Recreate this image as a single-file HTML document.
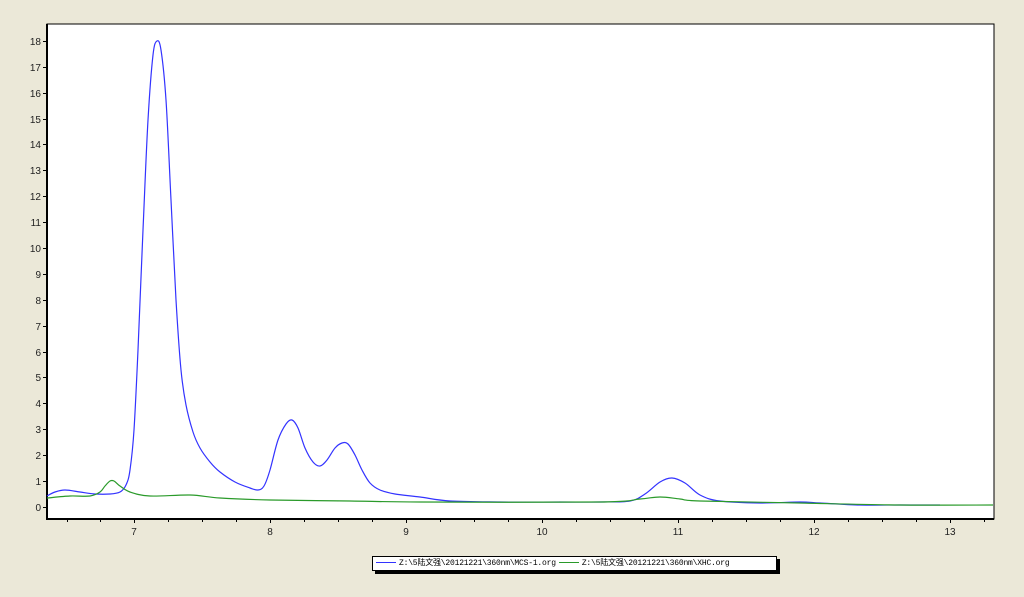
<!DOCTYPE html>
<html><head><meta charset="utf-8"><style>
html,body{margin:0;padding:0;background:#ebe8d8;width:1024px;height:597px;overflow:hidden}
svg{position:absolute;left:0;top:0}
.legend{position:absolute;left:372px;top:556px;width:403px;height:13px;background:#fff;border:1px solid #000;box-shadow:3px 3px 0 #000;font-family:"Liberation Mono","Noto Sans CJK SC",monospace;font-size:8px;letter-spacing:-0.2px;line-height:13px;white-space:nowrap;color:#000;overflow:hidden}
.ln{display:inline-block;width:20px;height:1px;vertical-align:middle;margin:0 3px 0 3px}
</style></head><body>
<svg width="1024" height="597" font-family="Liberation Sans, sans-serif" font-size="10" fill="#222">
<rect x="47" y="24" width="947" height="495" fill="#fff"/>
<path d="M47 24V519H994" fill="none" stroke="#000" stroke-width="2"/>
<rect x="47" y="24" width="947" height="495" fill="none" stroke="#000" stroke-width="1"/>
<g stroke="#000" stroke-width="1">
<path d="M43 41.5h4M43 67.5h4M43 93.5h4M43 119.5h4M43 144.5h4M43 170.5h4M43 196.5h4M43 222.5h4M43 248.5h4M43 274.5h4M43 300.5h4M43 326.5h4M43 352.5h4M43 377.5h4M43 403.5h4M43 429.5h4M43 455.5h4M43 481.5h4M43 507.5h4"/>
<path d="M67.5 519v3M100.5 519v3M134.5 519v4M168.5 519v3M202.5 519v3M236.5 519v3M270.5 519v4M304.5 519v3M338.5 519v3M372.5 519v3M406.5 519v4M440.5 519v3M474.5 519v3M508.5 519v3M542.5 519v4M576.5 519v3M610.5 519v3M644.5 519v3M678.5 519v4M712.5 519v3M746.5 519v3M780.5 519v3M814.5 519v4M848.5 519v3M882.5 519v3M916.5 519v3M950.5 519v4M984.5 519v3"/>
</g>
<g text-anchor="end">
<text x="41" y="45">18</text><text x="41" y="71">17</text><text x="41" y="97">16</text><text x="41" y="123">15</text><text x="41" y="148">14</text><text x="41" y="174">13</text><text x="41" y="200">12</text><text x="41" y="226">11</text><text x="41" y="252">10</text><text x="41" y="278">9</text><text x="41" y="304">8</text><text x="41" y="330">7</text><text x="41" y="356">6</text><text x="41" y="381">5</text><text x="41" y="407">4</text><text x="41" y="433">3</text><text x="41" y="459">2</text><text x="41" y="485">1</text><text x="41" y="511">0</text>
</g>
<g text-anchor="middle">
<text x="134" y="535">7</text><text x="270" y="535">8</text><text x="406" y="535">9</text><text x="542" y="535">10</text><text x="678" y="535">11</text><text x="814" y="535">12</text><text x="950" y="535">13</text>
</g>
<path id="blue" fill="none" stroke="#3333ff" stroke-width="1.2" data-p="47,496 55,492 65,490 80,492 95,494 110,494 120,492 126,485 130,470 134,430 138,350 143,230 148,120 153,55 157,41 161,50 166,100 171,200 176,300 181,370 186,405 193,432 200,448 210,462 220,472 235,482 250,488 258,490 264,486 270,470 278,440 286,424 292,420 298,428 305,448 313,462 320,466 327,460 335,448 342,443 348,444 355,455 362,470 370,483 380,490 395,494 420,497 450,501 500,502 560,502 600,502 630,501 645,494 660,482 672,478 685,483 700,495 720,501 760,503 800,502 820,503 860,505 900,505 940,505"/>
<path id="green" fill="none" stroke="#2a9a2a" stroke-width="1.2" data-p="47,498 70,496 90,496 100,492 105,486 110,481 114,481 120,486 130,492 150,496 190,495 220,498 270,500 350,501 420,502 600,502 640,499 660,497 680,499 700,501 800,503 900,505 993,505"/>
</svg>
<div class="legend"><span class="ln" style="background:#3333ff"></span>Z:\5陆文强\20121221\360nm\MCS-1.org<span class="ln" style="background:#2a9a2a"></span>Z:\5陆文强\20121221\360nm\XHC.org</div>
<script>
['blue','green'].forEach(function(id){
var el=document.getElementById(id);
var p=el.getAttribute('data-p').trim().split(/\s+/).map(function(s){return s.split(',').map(Number)});
var d='M'+p[0][0]+' '+p[0][1];
for(var i=0;i<p.length-1;i++){
var p0=p[i-1]||p[i],p1=p[i],p2=p[i+1],p3=p[i+2]||p2;
var c1x=p1[0]+(p2[0]-p0[0])/6,c1y=p1[1]+(p2[1]-p0[1])/6;
var c2x=p2[0]-(p3[0]-p1[0])/6,c2y=p2[1]-(p3[1]-p1[1])/6;
d+='C'+c1x.toFixed(1)+' '+c1y.toFixed(1)+' '+c2x.toFixed(1)+' '+c2y.toFixed(1)+' '+p2[0]+' '+p2[1];
}
el.setAttribute('d',d);
});
</script>
</body></html>
